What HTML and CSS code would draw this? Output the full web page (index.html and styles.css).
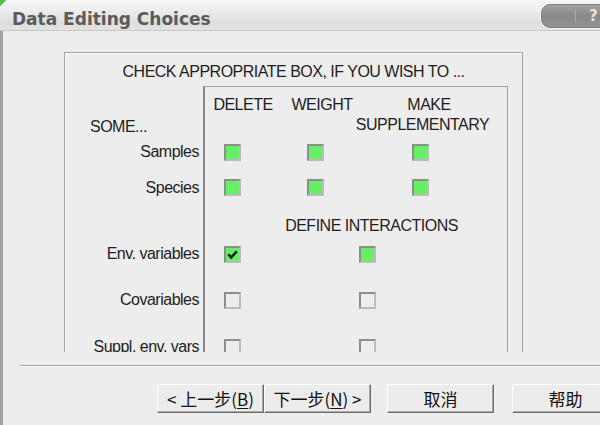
FILE: index.html
```html
<!DOCTYPE html>
<html>
<head>
<meta charset="utf-8">
<link rel="stylesheet" href="styles.css">
</head>
<body>
<div class="titlebar">
  <span class="title">Data Editing Choices</span>
  <div class="helpbtn"><span class="help-sep"></span><span class="help-q">?</span></div>
</div>
<div class="main">
  <div class="panel">
    <div class="group">
      <div class="caption">CHECK APPROPRIATE BOX, IF YOU WISH TO ...</div>
      <div class="grid">
        <div class="inner"></div>

        <div class="some">SOME...</div>
        <div class="hdr1">
          <span class="hc h-del">DELETE</span>
          <span class="hc h-wt">WEIGHT</span>
          <span class="hc h-make">MAKE</span>
        </div>
        <div class="hdr2"><span class="hc h-supp">SUPPLEMENTARY</span></div>

        <div class="lbl r3">Samples</div>
        <div class="checks3 r3">
          <span class="cb on c1"></span><span class="cb on c2"></span><span class="cb on c3"></span>
        </div>

        <div class="lbl r4">Species</div>
        <div class="checks3 r4">
          <span class="cb on c1"></span><span class="cb on c2"></span><span class="cb on c3"></span>
        </div>

        <div class="hdr5"><span class="hc h-def">DEFINE INTERACTIONS</span></div>

        <div class="lbl r6">Env. variables</div>
        <div class="checks2 r6">
          <span class="cb on c1"><svg viewBox="0 0 13 13" width="13" height="13"><polyline points="2.3,6.3 5.2,9.4 10.8,3.4" fill="none" stroke="#111" stroke-width="2.4"/></svg></span><span class="cb on c2b"></span>
        </div>

        <div class="lbl r7">Covariables</div>
        <div class="checks2 r7">
          <span class="cb c1"></span><span class="cb c2b"></span>
        </div>

        <div class="lbl r8">Suppl. env. vars</div>
        <div class="checks2 r8">
          <span class="cb c1"></span><span class="cb c2b"></span>
        </div>
      </div>
    </div>
  </div>
  <div class="sep"></div>
  <div class="buttons">
    <div class="btn">&lt; 上一步(<u>B</u>)</div>
    <div class="btn">下一步(<u>N</u>) &gt;</div>
    <div class="btn b3">取消</div>
    <div class="btn b4">帮助</div>
  </div>
</div>
</body>
</html>
```
FILE: styles.css
```css
* { box-sizing: border-box; }
html, body { margin: 0; padding: 0; }
body {
  width: 600px;
  height: 425px;
  overflow: hidden;
  background: #ededed;
  font-family: "Liberation Sans", Arial, sans-serif;
  font-size: 16px;
  letter-spacing: -0.5px;
  color: #1e1e1e;
}

.titlebar {
  height: 31px;
  display: flex;
  justify-content: space-between;
  align-items: flex-start;
  border-bottom: 1px solid #c6c6c6;
  background:
    linear-gradient(135deg, #4fc24f 0, #4fc24f 4px, transparent 5px),
    linear-gradient(#f6f6f6, #ededed 35%, #dedede 75%, #e3e3e3);
}
.title {
  font-family: "DejaVu Sans", sans-serif;
  font-weight: bold;
  font-size: 17px;
  letter-spacing: 0;
  line-height: 20px;
  color: #5a5a5a;
  margin: 9px 0 0 12px;
  white-space: nowrap;
}
.helpbtn {
  flex: none;
  margin-top: 4px;
  margin-right: -11px;
  width: 70px;
  height: 24px;
  border-radius: 9px 0 0 9px;
  border: 1px solid #7b7b7b;
  box-shadow: 0 0 0 1px #f4f4f4;
  background: linear-gradient(#a2a2a2, #898989 50%, #929292);
  display: flex;
  align-items: center;
}
.help-sep {
  width: 1px;
  height: 12px;
  background: #adadad;
  margin-left: 33px;
}
.help-q {
  margin-left: 13px;
  color: #e4e4e4;
  letter-spacing: 0;
  font: bold 15px "DejaVu Sans", sans-serif;
}

.main {
  height: 394px;
  border-left: 3px solid #a2a2a2;
}
.panel {
  height: 321px;
  overflow: hidden;
  padding-top: 21px;
}
.group {
  margin-left: 61px;
  width: 459px;
  height: 420px;
  border: 1px solid #a3a3a3;
  box-shadow: inset 1px 1px 0 #fafafa;
}
.caption {
  text-align: center;
  line-height: 20px;
  padding-top: 9px;
  margin-bottom: 4px;
  white-space: nowrap;
}
.grid {
  display: grid;
  grid-template-columns: 138px 305px;
  grid-template-rows: 29px 20px 34px 37px 30px 36px 56px 38px;
}
.inner {
  grid-column: 2;
  grid-row: 1 / -1;
  border-top: 1px solid #a0a0a0;
  border-right: 1px solid #a0a0a0;
  border-left: 2px solid #878787;
}
.some {
  grid-column: 1;
  grid-row: 2;
  padding: 2px 0 0 25px;
  line-height: 20px;
}
.lbl {
  grid-column: 1;
  display: flex;
  align-items: center;
  justify-content: flex-end;
  padding-right: 4px;
  white-space: nowrap;
}
.r3 { grid-row: 3; }
.r4 { grid-row: 4; }
.r6 { grid-row: 6; }
.r7 { grid-row: 7; }
.r8 { grid-row: 8; }

.hc {
  display: flex;
  justify-content: center;
  flex: none;
  white-space: nowrap;
  line-height: 20px;
}
.hdr1 {
  grid-column: 2;
  grid-row: 1;
  display: flex;
  align-items: flex-end;
}
.h-del { width: 80px; }
.h-wt { width: 78px; }
.h-make { width: 136px; }
.hdr2 {
  grid-column: 2;
  grid-row: 2;
  display: flex;
  padding-left: 158px;
}
.h-supp { width: 123px; }
.hdr5 {
  grid-column: 2;
  grid-row: 5;
  display: flex;
  align-items: flex-end;
  padding-left: 100px;
}
.h-def { width: 137px; }

.checks3, .checks2 {
  grid-column: 2;
  display: flex;
  align-items: center;
  padding-left: 21px;
}
.cb {
  flex: none;
  width: 17px;
  height: 17px;
  border: 2px solid;
  border-color: #8d8d8d #bcbcbc #bcbcbc #8d8d8d;
  background: #ededed;
  display: flex;
}
.cb.on { background: #64ef64; }
.c2 { margin-left: 66px; }
.c3 { margin-left: 88px; }
.c2b { margin-left: 118px; }

.sep {
  margin: 13px 0 0 17px;
  border-top: 1px solid #a0a0a0;
  border-bottom: 1px solid #ffffff;
}
.buttons {
  display: flex;
  margin-top: 17px;
  padding-left: 154px;
}
.btn {
  flex: none;
  width: 107px;
  height: 29px;
  border: 1px solid;
  border-color: #ffffff #6c6c6c #6c6c6c #ffffff;
  box-shadow: inset -1px -1px 0 #a9a9a9;
  background: #ececec;
  display: flex;
  align-items: center;
  justify-content: center;
  font-family: "Noto Sans CJK SC", sans-serif;
  font-size: 17px;
  letter-spacing: 0;
  color: #111;
  white-space: nowrap;
}
.btn u { text-underline-offset: 2px; }
.b3 { margin-left: 16px; }
.b4 { margin-left: 18px; }
```
